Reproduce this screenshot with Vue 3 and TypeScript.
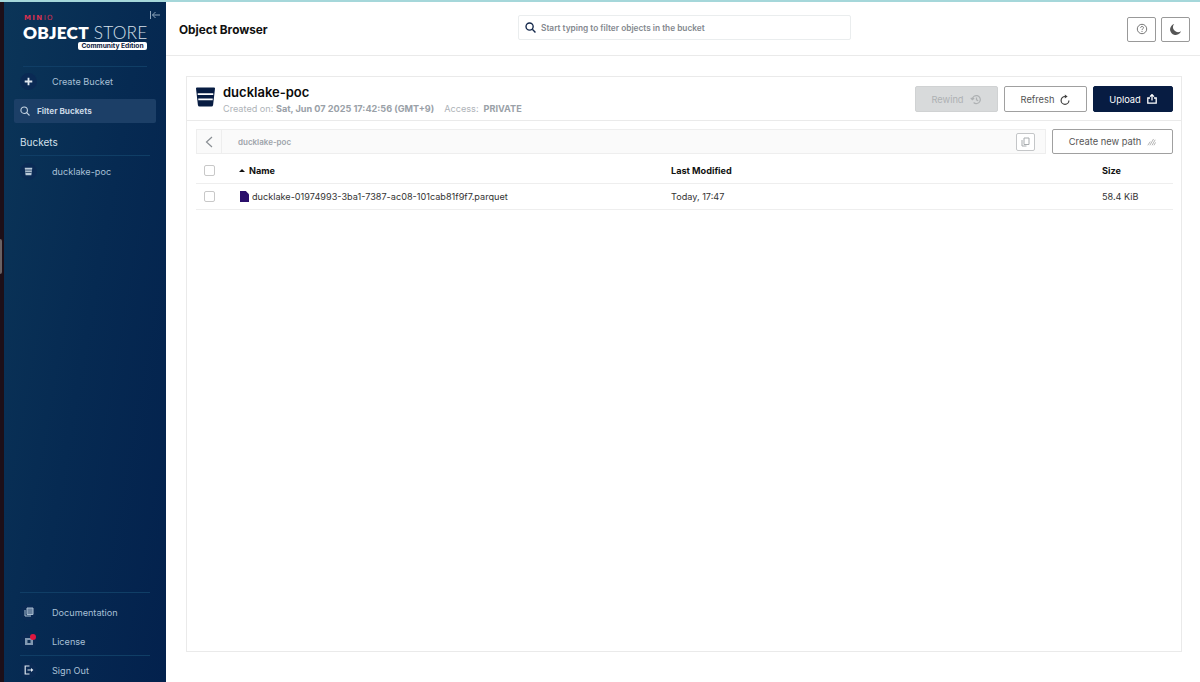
<script setup lang="ts">
const nothing = null
</script>

<template>
  <div class="page">
    <aside class="strip"><span class="strip-handle"></span></aside>
    <nav class="side">
      <div class="brand">
        <svg class="collapse" width="12" height="10" viewBox="0 0 12 10" fill="none" stroke="#8ea6bd" stroke-width="1"><path d="M1.5 1v8M11 5H3.5M6.5 2L3.5 5l3 3"/></svg>
        <div class="minio">MIN<span>IO</span></div>
        <div class="os"><b>OBJECT</b> STORE</div>
        <div class="edition">Community Edition</div>
      </div>
      <div class="rule first"></div>
      <div class="item create">
        <span class="dot"><svg width="9" height="9" viewBox="0 0 10 10" fill="none" stroke="#dfe8f0" stroke-width="2"><path d="M5 .8v8.4M.8 5h8.4"/></svg></span>
        <span>Create Bucket</span>
      </div>
      <div class="filter">
        <svg width="10" height="10" viewBox="0 0 12 12" fill="none" stroke="#c6d5e3" stroke-width="1.3"><circle cx="5" cy="5" r="3.9"/><path d="M8 8l3.4 3.4"/></svg>
        <span>Filter Buckets</span>
      </div>
      <div class="buckets">Buckets</div>
      <div class="rule"></div>
      <div class="item bucket">
        <span class="dot"><svg width="9" height="9" viewBox="0 0 10 10"><path d="M.8 .8h8.4L8.2 9.2H1.8z" fill="#b9c9d8"/><path d="M1.2 3.4h7.6M1.5 6h7" stroke="#0f2f55" stroke-width=".9"/></svg></span>
        <span>ducklake-poc</span>
      </div>
      <div class="spacer"></div>
      <div class="rule"></div>
      <div class="item doc">
        <span class="dot"><svg width="10" height="10" viewBox="0 0 10 10" fill="none" stroke="#a9bdd0" stroke-width="1"><path d="M3 1h6v6.5H3z" fill="#a9bdd0" fill-opacity=".6"/><path d="M1 3v6h6"/></svg></span>
        <span>Documentation</span>
      </div>
      <div class="item lic">
        <span class="dot"><svg width="10" height="10" viewBox="0 0 10 10"><rect x="1" y="2" width="8" height="7" fill="#a9bdd0" fill-opacity=".75"/><rect x="3.5" y="4" width="3" height="3" fill="#0f2f55"/></svg><i class="badge"></i></span>
        <span>License</span>
      </div>
      <div class="rule tight"></div>
      <div class="item out">
        <span class="dot"><svg width="10" height="10" viewBox="0 0 10 10" fill="none" stroke="#dfe8f0" stroke-width="1.2"><path d="M5.5 1H1.2v8h4.3M3.5 5h4.5"/><path d="M7 3l2.4 2L7 7z" fill="#dfe8f0" stroke="none"/></svg></span>
        <span>Sign Out</span>
      </div>
    </nav>
    <main class="main">
      <header class="top">
        <h1>Object Browser</h1>
        <div class="search">
          <svg width="11" height="11" viewBox="0 0 12 12" fill="none" stroke="#14284b" stroke-width="1.5"><circle cx="5" cy="5" r="3.9"/><path d="M8 8l3.4 3.4"/></svg>
          <span>Start typing to filter objects in the bucket</span>
        </div>
        <div class="top-btns">
          <button class="icon-btn"><svg width="12" height="12" viewBox="0 0 12 12" fill="none" stroke="#777" stroke-width="1"><circle cx="6" cy="6" r="4.7"/><path d="M4.6 4.8c0-1.8 2.9-1.8 2.9-.1 0 1.2-1.5 1.1-1.5 2.4M6 8v1"/></svg></button>
          <button class="icon-btn"><svg width="13" height="13" viewBox="0 0 13 13"><path d="M5.2 1A5.6 5.6 0 1 0 12 8.2 5 5 0 0 1 5.2 1z" fill="#555"/></svg></button>
        </div>
      </header>
      <section class="card">
        <div class="head">
          <svg class="big" width="19" height="20" viewBox="0 0 20 20"><path d="M1 0h18a1 1 0 0 1 1 1.1L18 18.4a1.8 1.8 0 0 1-1.8 1.6H3.8A1.8 1.8 0 0 1 2 18.4L0 1.1A1 1 0 0 1 1 0z" fill="#071c42"/><path d="M1.8 7h16.4M2.4 12.5h15.2" stroke="#fff" stroke-width="1.7"/></svg>
          <div class="title">
            <div class="name">ducklake-poc</div>
            <div class="meta">Created on: <b>Sat, Jun 07 2025 17:42:56 (GMT+9)</b><span class="access">Access:</span><b>PRIVATE</b></div>
          </div>
          <div class="actions">
            <button class="btn dis">Rewind <svg width="12" height="11" viewBox="0 0 12 11" fill="none" stroke="#aeb1b3" stroke-width="1.2"><path d="M2.3 5.5a4 4 0 1 1 1.3 3M.8 3.8l1.5 1.9 1.9-1.4M6.5 3.5v2.3l1.7 1"/></svg></button>
            <button class="btn"><span>Refresh</span> <svg width="10" height="11" viewBox="0 0 10 11" fill="none" stroke="#404040" stroke-width="1.2"><path d="M5 2.5A3.9 3.9 0 1 0 8.9 6.4"/><path d="M4.8 .4v4.2L7.6 2.5z" fill="#404040" stroke="none"/></svg></button>
            <button class="btn solid">Upload <svg width="10" height="10" viewBox="0 0 10 10" fill="none" stroke="#fff" stroke-width="1.3"><path d="M3 4H.8v5.2h8.4V4H7M5 6.5V1M3 2.6L5 .6l2 2"/></svg></button>
          </div>
        </div>
        <div class="body">
          <div class="pathrow">
            <div class="crumb">
              <span class="back"><svg width="8" height="12" viewBox="0 0 8 12" fill="none" stroke="#8a8f94" stroke-width="1.2"><path d="M7 1L1.5 6 7 11"/></svg></span>
              <span class="path">ducklake-poc</span>
              <span class="copy"><svg width="9" height="10" viewBox="0 0 9 10" fill="none" stroke="#a8acaf"><path d="M3 1h5v6.5H3z"/><path d="M1 3v6h4.5"/></svg></span>
            </div>
            <button class="btn newpath">Create new path <svg width="9" height="8" viewBox="0 0 11 9" fill="none" stroke="#9a9a9a" stroke-width=".9"><path d="M1 8.5L4 4M3.5 8.5L8 .8M6.2 8.5L10 1.8M8.5 8.5L10.5 5"/></svg></button>
          </div>
          <div class="row hd">
            <span class="cb"></span>
            <span class="c-name"><i class="sort"></i>Name</span>
            <span class="c-mod">Last Modified</span>
            <span class="c-size">Size</span>
          </div>
          <div class="row">
            <span class="cb"></span>
            <span class="c-name file"><svg width="9" height="11" viewBox="0 0 9 11"><path d="M0 0h5.8L9 3.2V11H0z" fill="#2a0f6b"/></svg>ducklake-01974993-3ba1-7387-ac08-101cab81f9f7.parquet</span>
            <span class="c-mod">Today, 17:47</span>
            <span class="c-size">58.4 KiB</span>
          </div>
        </div>
      </section>
    </main>
  </div>
</template>

<style>
html, body { margin: 0; background: #fff; }
</style>

<style scoped>
* { box-sizing: border-box; }
.page { width: 1200px; height: 682px; display: flex; overflow: hidden; position: relative; font-family: Inter, "Liberation Sans", sans-serif; color: #1c1c1c; background: #fff; }
.page::before { content: ""; position: absolute; top: 0; left: 0; right: 0; height: 2px; background: #a5d7da; z-index: 3; }
.strip { width: 4px; background: #1d0f18; position: relative; }
.strip-handle { position: absolute; left: 0; top: 239px; width: 2px; height: 35px; background: #6a6264; border-radius: 0 2px 2px 0; }
.side { width: 162px; height: 682px; display: flex; flex-direction: column; background: linear-gradient(100deg, #0b3558 0%, #062a52 50%, #03214d 100%); color: #a9c0d6; font-size: 9.15px; }
.brand { height: 66px; padding: 15px 0 0 19px; position: relative; }
.collapse { position: absolute; left: 145px; top: 10px; }
.minio { font-size: 7px; line-height: 6px; font-weight: 900; color: #d8304f; letter-spacing: 1.4px; font-family: "DejaVu Sans", "Liberation Sans", sans-serif; margin-left: 1px; }
.minio span { font-weight: 400; }
.os { font-family: Lato, "Liberation Sans", sans-serif; font-size: 17.3px; line-height: 17px; margin-top: 3px; color: #d6e0ea; font-weight: 300; white-space: nowrap; letter-spacing: .2px; }
.os b { font-weight: 800; color: #fff; }
.edition { position: absolute; left: 74px; top: 42px; width: 69px; height: 8px; background: #fff; color: #0d2040; font-size: 6.7px; line-height: 8px; font-weight: 700; text-align: center; white-space: nowrap; border-radius: 2px; overflow: hidden; }
.rule { height: 1px; margin: 0 16px; background: #103e66; flex: none; }
.rule.first { margin: 0 19px 0 19px; }
.item { display: flex; align-items: center; height: 28px; padding-left: 16px; white-space: nowrap; }
.dot { width: 17px; height: 17px; border-radius: 50%; background: #0a2a54; display: flex; align-items: center; justify-content: center; margin-right: 15px; flex: none; position: relative; }
.filter { margin: 4px 0 0 10px; width: 142px; height: 24px; background: #1c3f67; border-radius: 2px; display: flex; align-items: center; gap: 7px; padding-left: 6px; color: #c8d6e4; font-size: 8.2px; font-weight: 700; }
.buckets { margin: 13px 0 7px 16px; font-size: 10px; line-height: 12px; color: #d5e0ea; }
.bucket { margin-top: 1px; }
.spacer { flex: 1; }
.doc { margin-top: 5px; }
.lic { margin-top: 1px; }
.out { margin: 0 0 -2px; }
.badge { position: absolute; right: 1px; top: 1px; width: 6px; height: 6px; border-radius: 50%; background: #e0173f; }
.main { flex: 1; min-width: 0; display: flex; flex-direction: column; padding-top: 2px; }
.top { height: 54px; display: flex; align-items: center; padding: 2px 10px 0 13px; border-bottom: 1px solid #eaeaea; position: relative; }
.top h1 { margin: 0; font-size: 11.8px; font-weight: 700; color: #111; }
.search { position: absolute; left: 352px; top: 13px; width: 333px; height: 25px; border: 1px solid #eaedee; border-radius: 2px; display: flex; align-items: center; gap: 5px; padding-left: 6px; font-size: 8.3px; font-weight: 600; color: #84898f; }
.top-btns { margin-left: auto; display: flex; gap: 5px; margin-top: -1px; }
.icon-btn { width: 29px; height: 25px; padding: 0; border: 1px solid #999; border-radius: 2px; background: #fff; display: flex; align-items: center; justify-content: center; }
.card { margin: 20px 18px 30px 20px; height: 576px; border: 1px solid #eaeaea; display: flex; flex-direction: column; }
.head { height: 44px; display: flex; align-items: flex-start; border-bottom: 1px solid #eaeaea; padding: 10px 8px 0 9px; flex: none; }
.big { margin-right: 8px; }
.name { font-size: 13px; font-weight: 600; line-height: 13px; color: #0a0a0a; margin-top: -1px; }
.meta { margin-top: 4px; font-size: 9.13px; line-height: 11px; color: #aeb3b8; white-space: nowrap; }
.meta b { font-weight: 700; color: #9aa1a8; }
.access { margin: 0 5px 0 10px; }
.actions { margin-left: auto; display: flex; gap: 6px; margin-top: -1px; }
.btn { height: 26px; width: 83px; padding: 0; border: 1px solid #a0a0a0; border-radius: 2px; background: #fff; color: #555; font: inherit; font-size: 9.3px; display: flex; align-items: center; justify-content: center; gap: 6px; white-space: nowrap; }
.btn.dis { background: #d8dadb; border-color: #d0d2d3; color: #aeb1b3; }
.btn.solid { width: 80px; background: #071c42; border-color: #071c42; color: #fff; }
.body { padding: 8px 8px 0 9px; flex: 1; }
.pathrow { display: flex; gap: 6px; height: 25px; }
.crumb { flex: 1; display: flex; align-items: center; border: 1px solid #eeeeee; background: #fafafa; position: relative; }
.back { width: 25px; height: 100%; border-right: 1px solid #eeeeee; display: flex; align-items: center; justify-content: center; }
.path { margin-left: 16px; font-size: 8px; font-weight: 600; color: #9ea4aa; }
.copy { margin-left: auto; margin-right: 10px; width: 19px; height: 18px; border: 1px solid #c4c6c8; border-radius: 2px; display: flex; align-items: center; justify-content: center; background: #fff; }
.newpath { width: 121px; height: 25px; }
.row { display: flex; align-items: center; height: 26px; border-bottom: 1px solid #eeeeee; font-size: 9.13px; color: #333; }
.hd { height: 30px; padding-top: 4px; font-weight: 700; color: #111; }
.cb { width: 11px; height: 11px; margin-left: 8px; border: 1px solid #c8c8c8; border-radius: 2px; background: #fff; flex: none; }
.c-name { width: 444px; margin-left: 12px; padding-left: 12px; display: flex; align-items: center; white-space: nowrap; }
.sort { width: 0; height: 0; border-left: 3.5px solid transparent; border-right: 3.5px solid transparent; border-bottom: 3.5px solid #111; margin-right: 4px; }
.file svg { margin: 0 3px 0 1px; }
.c-mod { width: 431px; white-space: nowrap; }
.c-size { white-space: nowrap; }
</style>
